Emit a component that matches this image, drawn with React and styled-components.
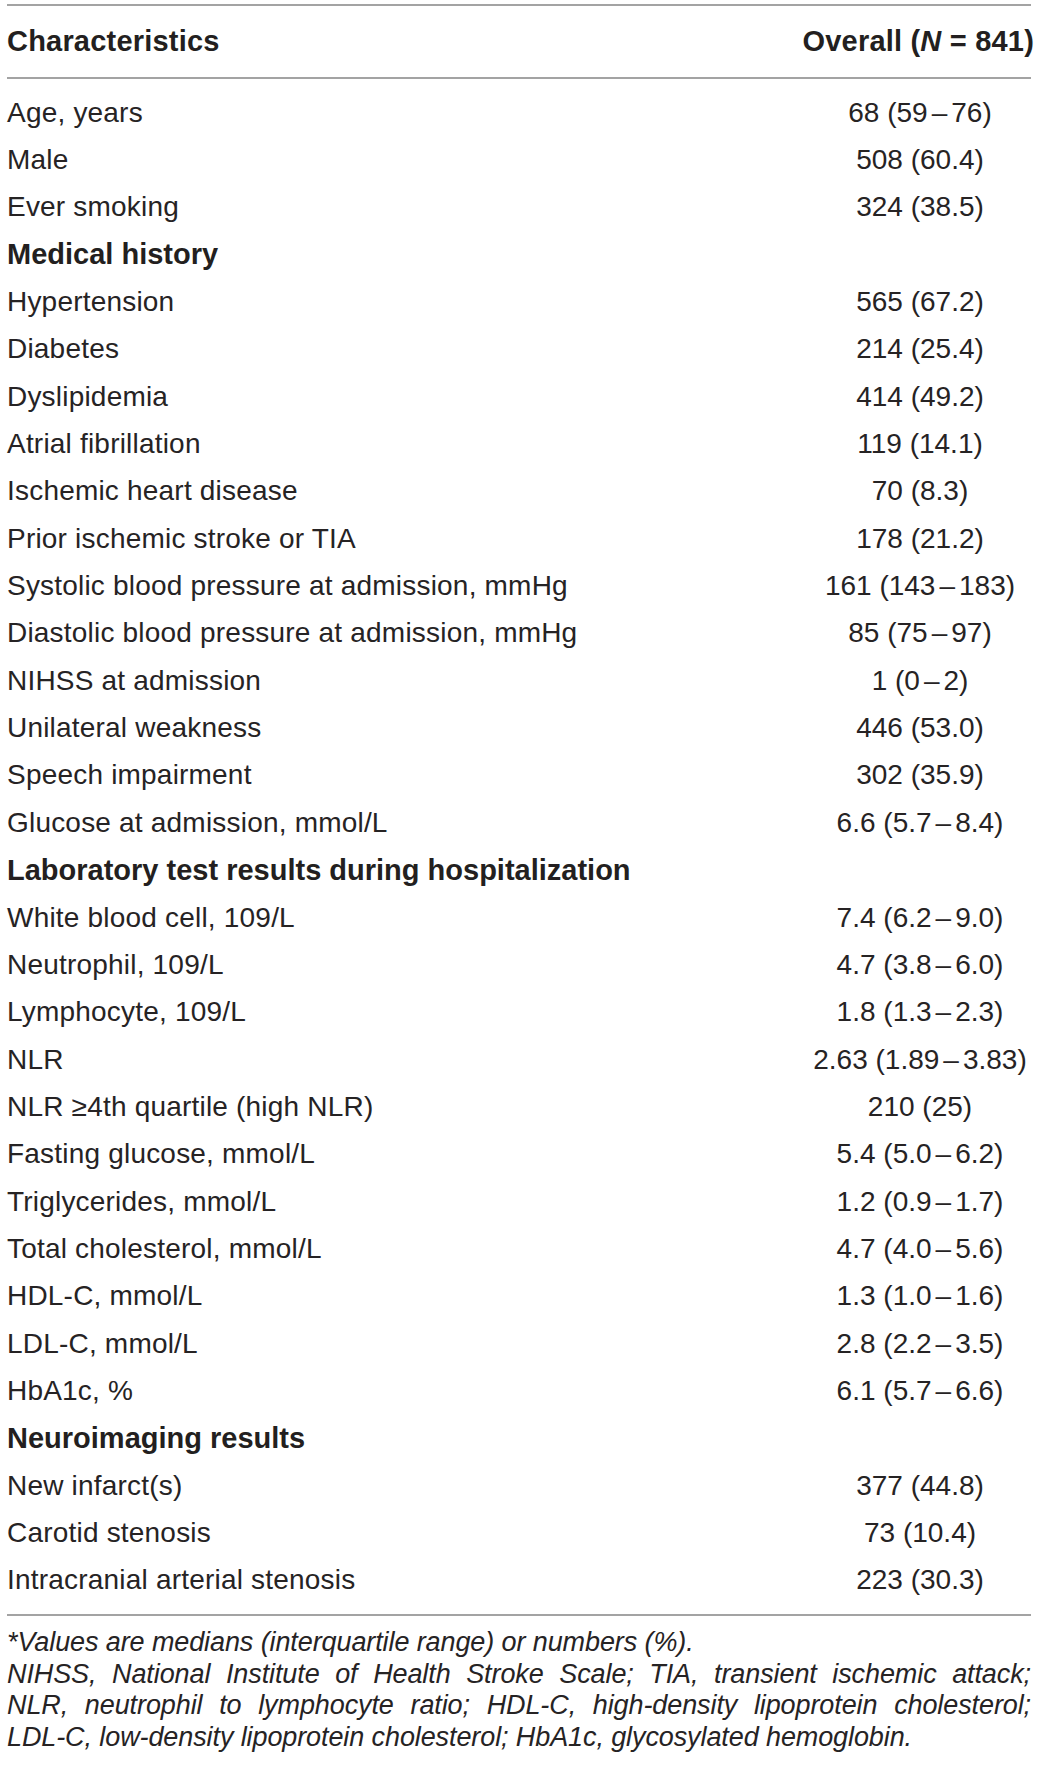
import styled, { createGlobalStyle } from "styled-components";

const GlobalStyle = createGlobalStyle`
  html, body {
    margin: 0;
    padding: 0;
    background: #fff;
  }
  body {
    font-family: "Liberation Sans", Arial, sans-serif;
    color: #262324;
  }
`;

const Page = styled.div`
  width: 1040px;
  padding: 4px 9px 0 7px;
  box-sizing: border-box;
`;

const Table = styled.div`
  border-top: 2px solid #a3a3a3;
  border-bottom: 2px solid #a3a3a3;
`;

const HeadRow = styled.div`
  display: flex;
  justify-content: space-between;
  align-items: center;
  height: 71px;
  border-bottom: 2px solid #a3a3a3;
  font-size: 29px;
  font-weight: 700;
  letter-spacing: 0.2px;
  color: #231f20;
`;

const HeadCell = styled.div`
  margin-right: -3px;
`;

const Body = styled.div`
  padding: 10px 0 10px;
`;

const Row = styled.div`
  display: flex;
  align-items: center;
  height: 47.35px;
  font-size: ${(p) => (p.$section ? "29px" : "28px")};
  font-weight: ${(p) => (p.$section ? 700 : 400)};
  color: ${(p) => (p.$section ? "#231f20" : "#262324")};
`;

const Label = styled.div`
  flex: 1;
  white-space: nowrap;
  letter-spacing: ${(p) => (p.$section ? "0" : "0.2px")};
`;

const Value = styled.div`
  width: 222px;
  text-align: center;
  white-space: nowrap;
`;

const Dash = styled.span`
  margin: 0 4px;
`;

const Notes = styled.div`
  padding-top: 11px;
  font-size: 27px;
  font-style: italic;
  line-height: 31.5px;
  letter-spacing: -0.1px;
`;

const Note = styled.div`
  white-space: ${(p) => (p.$justify ? "normal" : "nowrap")};
  text-align: ${(p) => (p.$justify ? "justify" : "left")};
  text-align-last: ${(p) => (p.$justify ? "justify" : "auto")};
`;

const rows = [
  ["Age, years", "68 (59–76)"],
  ["Male", "508 (60.4)"],
  ["Ever smoking", "324 (38.5)"],
  ["Medical history"],
  ["Hypertension", "565 (67.2)"],
  ["Diabetes", "214 (25.4)"],
  ["Dyslipidemia", "414 (49.2)"],
  ["Atrial fibrillation", "119 (14.1)"],
  ["Ischemic heart disease", "70 (8.3)"],
  ["Prior ischemic stroke or TIA", "178 (21.2)"],
  ["Systolic blood pressure at admission, mmHg", "161 (143–183)"],
  ["Diastolic blood pressure at admission, mmHg", "85 (75–97)"],
  ["NIHSS at admission", "1 (0–2)"],
  ["Unilateral weakness", "446 (53.0)"],
  ["Speech impairment", "302 (35.9)"],
  ["Glucose at admission, mmol/L", "6.6 (5.7–8.4)"],
  ["Laboratory test results during hospitalization"],
  ["White blood cell, 109/L", "7.4 (6.2–9.0)"],
  ["Neutrophil, 109/L", "4.7 (3.8–6.0)"],
  ["Lymphocyte, 109/L", "1.8 (1.3–2.3)"],
  ["NLR", "2.63 (1.89–3.83)"],
  ["NLR ≥4th quartile (high NLR)", "210 (25)"],
  ["Fasting glucose, mmol/L", "5.4 (5.0–6.2)"],
  ["Triglycerides, mmol/L", "1.2 (0.9–1.7)"],
  ["Total cholesterol, mmol/L", "4.7 (4.0–5.6)"],
  ["HDL-C, mmol/L", "1.3 (1.0–1.6)"],
  ["LDL-C, mmol/L", "2.8 (2.2–3.5)"],
  ["HbA1c, %", "6.1 (5.7–6.6)"],
  ["Neuroimaging results"],
  ["New infarct(s)", "377 (44.8)"],
  ["Carotid stenosis", "73 (10.4)"],
  ["Intracranial arterial stenosis", "223 (30.3)"],
];

const notes = [
  ["*Values are medians (interquartile range) or numbers (%).", false],
  ["NIHSS, National Institute of Health Stroke Scale; TIA, transient ischemic attack;", true],
  ["NLR, neutrophil to lymphocyte ratio; HDL-C, high-density lipoprotein cholesterol;", true],
  ["LDL-C, low-density lipoprotein cholesterol; HbA1c, glycosylated hemoglobin.", false],
];

// ranges get a little air around the dash, as in the print layout
function Range({ text }) {
  const parts = text.split("–");
  if (parts.length < 2) return text;
  return (
    <>
      {parts[0]}
      <Dash>–</Dash>
      {parts[1]}
    </>
  );
}

export default function App() {
  return (
    <>
      <GlobalStyle />
      <Page>
        <Table>
          <HeadRow>
            <div>Characteristics</div>
            <HeadCell>
              Overall (<i>N</i> = 841)
            </HeadCell>
          </HeadRow>
          <Body>
            {rows.map(([label, value]) => (
              <Row key={label} $section={!value}>
                <Label $section={!value}>{label}</Label>
                {value && (
                  <Value>
                    <Range text={value} />
                  </Value>
                )}
              </Row>
            ))}
          </Body>
        </Table>
        <Notes>
          {notes.map(([n, justify]) => (
            <Note key={n} $justify={justify}>
              {n}
            </Note>
          ))}
        </Notes>
      </Page>
    </>
  );
}
